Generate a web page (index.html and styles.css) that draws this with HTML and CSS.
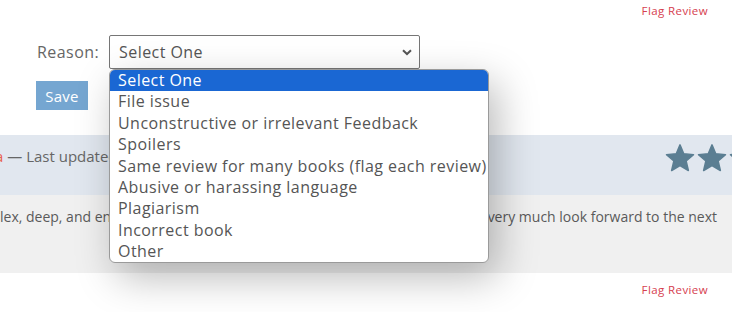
FILE: index.html
```html
<!DOCTYPE html>
<html>
<head>
<meta charset="utf-8">
<link rel="stylesheet" href="styles.css">
</head>
<body>
<div class="page">
  <div class="flag-row"><a class="flag">Flag Review</a></div>
  <div class="form-row">
    <label class="label">Reason:</label>
    <div class="select">
      <span>Select One</span>
      <svg class="chev" width="10" height="7" viewBox="0 0 10 7"><path d="M1 1.2 L5 5 L9 1.2" fill="none" stroke="#555" stroke-width="2"/></svg>
    </div>
  </div>
  <div class="btn-row"><button class="save">Save</button></div>
  <div class="review-head">
    <div class="meta"><span class="name">a</span> — Last updated 3 months ago</div>
    <div class="stars">
      <svg width="30" height="30" viewBox="0 0 24 24"><path d="M12 1.5 L15 8.6 L22.8 9.3 L16.9 14.4 L18.7 22 L12 18 L5.3 22 L7.1 14.4 L1.2 9.3 L9 8.6 Z" fill="#5b7e92" stroke="#5b7e92" stroke-width="1.2" stroke-linejoin="round"/></svg>
      <svg width="30" height="30" viewBox="0 0 24 24"><path d="M12 1.5 L15 8.6 L22.8 9.3 L16.9 14.4 L18.7 22 L12 18 L5.3 22 L7.1 14.4 L1.2 9.3 L9 8.6 Z" fill="#5b7e92" stroke="#5b7e92" stroke-width="1.2" stroke-linejoin="round"/></svg>
      <svg width="30" height="30" viewBox="0 0 24 24"><path d="M12 1.5 L15 8.6 L22.8 9.3 L16.9 14.4 L18.7 22 L12 18 L5.3 22 L7.1 14.4 L1.2 9.3 L9 8.6 Z" fill="#5b7e92" stroke="#5b7e92" stroke-width="1.2" stroke-linejoin="round"/></svg>
    </div>
  </div>
  <div class="review-body">
    <span>lex, deep, and engaging characters.</span>
    <span>very much look forward to the next</span>
  </div>
  <div class="flag-row bottom"><a class="flag">Flag Review</a></div>

  <ul class="dropdown">
    <li class="sel">Select One</li>
    <li>File issue</li>
    <li>Unconstructive or irrelevant Feedback</li>
    <li>Spoilers</li>
    <li>Same review for many books (flag each review)</li>
    <li>Abusive or harassing language</li>
    <li>Plagiarism</li>
    <li>Incorrect book</li>
    <li>Other</li>
  </ul>
</div>
</body>
</html>
```
FILE: styles.css
```css
html, body {
  margin: 0;
  padding: 0;
  background: #fff;
  overflow: hidden;
}
.page {
  position: relative;
  width: 732px;
  height: 312px;
  font-family: "Open Sans", "Lato", sans-serif;
  color: #666;
  letter-spacing: 0.45px;
}
.flag-row {
  display: flex;
  justify-content: flex-end;
  padding: 3px 24px 0 0;
  height: 20px;
  box-sizing: border-box;
}
.flag {
  font-size: 11.5px;
  letter-spacing: 0.4px;
  color: #d6404f;
}
.form-row {
  display: flex;
  align-items: center;
  margin-top: 15px;
  padding-left: 37px;
}
.label {
  font-size: 16px;
  color: #666;
  width: 72px;
}
.select {
  box-sizing: border-box;
  width: 311px;
  height: 34px;
  border: 1px solid #767676;
  border-radius: 2px;
  display: flex;
  align-items: center;
  justify-content: space-between;
  padding: 0 6px 0 9px;
  font-size: 16px;
  color: #555;
}
.chev { margin-right: 1px; }
.btn-row {
  padding-left: 36px;
  margin-top: 12px;
}
.save {
  display: block;
  width: 52px;
  height: 29px;
  border: none;
  background: #75a6d1;
  color: #fff;
  font-family: inherit;
  font-size: 15px;
  letter-spacing: 0.3px;
  padding: 0;
}
.review-head {
  margin-top: 25px;
  height: 60px;
  background: #e1e7ef;
  display: flex;
  justify-content: space-between;
  align-items: flex-start;
  overflow: hidden;
}
.meta {
  font-size: 15px;
  letter-spacing: 0;
  margin-top: 11px;
  margin-left: -5px;
  color: #666;
  white-space: nowrap;
}
.name { color: #e8604c; }
.stars {
  display: flex;
  gap: 2px;
  margin-top: 8px;
  margin-right: -27px;
}
.review-body {
  height: 78px;
  background: #f0f0f0;
  display: flex;
  justify-content: space-between;
  padding: 12px 15px 0 0;
  box-sizing: border-box;
  font-size: 14px;
  letter-spacing: 0;
  color: #5a5a5a;
}
.flag-row.bottom {
  padding-top: 9px;
}
.dropdown {
  position: absolute;
  left: 109px;
  top: 69px;
  width: 380px;
  height: 194px;
  box-sizing: border-box;
  margin: 0;
  padding: 0;
  list-style: none;
  background: #fff;
  border: 1px solid #9a9a9a;
  border-radius: 6px;
  box-shadow: 8px 14px 40px rgba(0,0,0,0.28);
  overflow: hidden;
  font-size: 16px;
  color: #555;
}
.dropdown li {
  height: 21.4px;
  line-height: 21px;
  padding-left: 8px;
  white-space: nowrap;
}
.dropdown li.sel {
  background: #1a67d3;
  color: #fff;
}
```
